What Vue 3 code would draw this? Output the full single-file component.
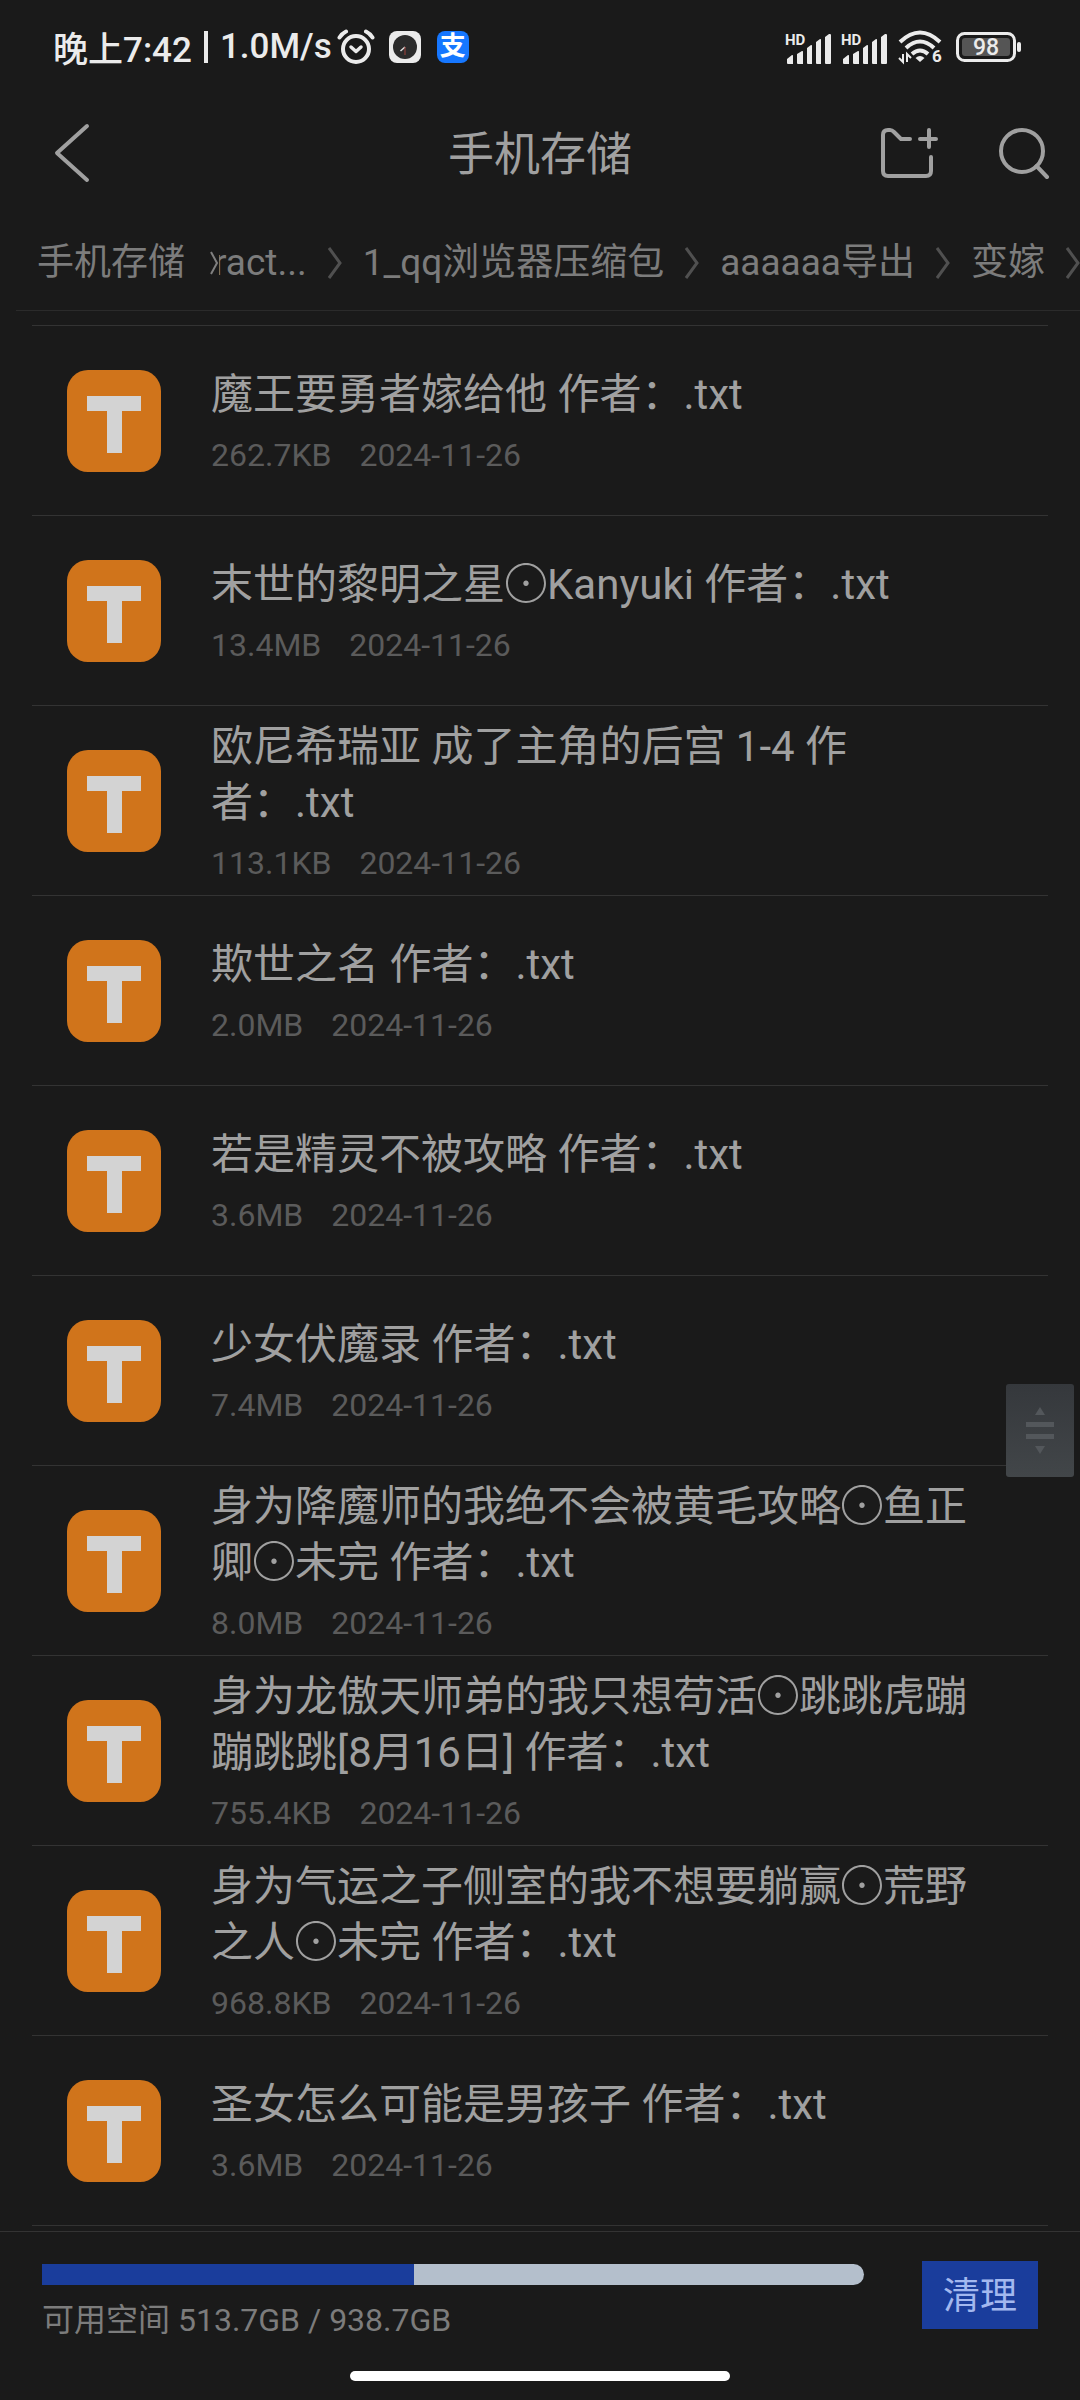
<script setup>
const crumbs = ['ract...', '1_qq浏览器压缩包', 'aaaaaa导出', '变嫁']

const files = [
  { name: '魔王要勇者嫁给他 作者：.txt', size: '262.7KB', date: '2024-11-26' },
  { name: '末世的黎明之星⊙Kanyuki 作者：.txt', size: '13.4MB', date: '2024-11-26' },
  { name: '欧尼希瑞亚 成了主角的后宫 1-4 作者：.txt', size: '113.1KB', date: '2024-11-26' },
  { name: '欺世之名 作者：.txt', size: '2.0MB', date: '2024-11-26' },
  { name: '若是精灵不被攻略 作者：.txt', size: '3.6MB', date: '2024-11-26' },
  { name: '少女伏魔录 作者：.txt', size: '7.4MB', date: '2024-11-26' },
  { name: '身为降魔师的我绝不会被黄毛攻略⊙鱼正卿⊙未完 作者：.txt', size: '8.0MB', date: '2024-11-26' },
  { name: '身为龙傲天师弟的我只想苟活⊙跳跳虎蹦蹦跳跳[8月16日] 作者：.txt', size: '755.4KB', date: '2024-11-26' },
  { name: '身为气运之子侧室的我不想要躺赢⊙荒野之人⊙未完 作者：.txt', size: '968.8KB', date: '2024-11-26' },
  { name: '圣女怎么可能是男孩子 作者：.txt', size: '3.6MB', date: '2024-11-26' },
]

// Splits a name so that each ⊙ separator can be set as a full-width ring.
const parts = (name) => name.split(/(⊙)/)

const free = 513.7
const total = 938.7
const usedPercent = ((total - free) / total) * 100
</script>

<template>
  <div class="page" lang="zh-CN">
    <div class="status">
      <div class="status-left">
        <span class="clock">晚上7:42</span>
        <span class="divider"></span>
        <span>1.0M/s</span>
        <svg class="alarm" width="38" height="36" viewBox="0 0 38 36" fill="none" stroke="#ebebeb" stroke-linecap="round" stroke-linejoin="round">
          <circle cx="19" cy="20" r="13" stroke-width="4" />
          <path d="M2.500 8.500Q5 4.500 9 2.500M35.500 8.500Q33 4.500 29 2.500" stroke-width="4" />
          <path d="M14 18l5 4.500 5-4.500" stroke-width="3.500" />
        </svg>
        <svg class="app" width="32" height="32" viewBox="0 0 32 32">
          <rect width="32" height="32" rx="8" fill="#ebebeb" />
          <circle cx="16" cy="16" r="12" fill="#2b2b2b" />
          <path d="M16 16l-4.500 4" stroke="#ddd" stroke-width="1.500" />
          <path d="M16 16v8" stroke="#a0403a" stroke-width="1" />
        </svg>
        <span class="pay">支</span>
      </div>
      <div class="status-right">
        <svg v-for="n in 2" :key="n" class="signal" width="48" height="36" viewBox="0 -4 48 36" fill="#ebebeb">
          <text x="0" y="12" class="hd">HD</text>
          <path d="M2 30v-4l5-4q1-.5 1 1v8h-5q-1 0-1-1zM12 30V21l5-3q1-.5 1 1v12h-5q-1 0-1-1zM22 30V15l4-3q1-.5 1 1v18h-4q-1 0-1-1zM31 30V9l4-3q1-.5 1 1v24h-4q-1 0-1-1zM40 30V4l4-3q2-.5 2 1v28q0 1-1 1h-4q-1 0-1-1z" />
        </svg>
        <svg class="wifi" width="46" height="38" viewBox="0 0 46 38" fill="none" stroke="#ebebeb" stroke-width="4">
          <path d="M2 14Q22-5 42 14M8 20Q22 7 36 20M14 26Q22 19 30 26" />
          <path d="M17.500 30Q22 26 26.500 30L22 34z" fill="#ebebeb" stroke="none" />
          <path d="M5 26v8l-4-4M9 34v-8l4 4" stroke-width="2" />
          <text x="34" y="34" class="six">6</text>
        </svg>
        <svg class="battery" width="66" height="30" viewBox="0 0 66 30">
          <rect x="1.500" y="1.500" width="57" height="27" rx="7" fill="none" stroke="#ebebeb" stroke-width="3" />
          <rect x="6" y="6" width="48" height="18" rx="3" fill="#555" />
          <rect x="61" y="10" width="4" height="10" rx="2" fill="#ebebeb" />
          <text x="30" y="23" text-anchor="middle" class="level">98</text>
        </svg>
      </div>
    </div>

    <header class="header">
      <button class="icon back" aria-label="返回">
        <svg width="36" height="60" viewBox="0 0 36 60"><path d="M33 3L3 30l30 27" /></svg>
      </button>
      <h1>手机存储</h1>
      <div class="actions">
        <button class="icon" aria-label="新建文件夹">
          <svg width="58" height="52" viewBox="0 0 58 52">
            <path d="M30 12h-9l-7-7Q12 3 10 3H8Q3 3 3 8v36q0 5 5 5h38q5 0 5-5V30M49 3v17M40 12h16" />
          </svg>
        </button>
        <button class="icon" aria-label="搜索">
          <svg width="52" height="52" viewBox="0 0 52 52"><circle cx="24" cy="24" r="21" /><path d="M38.500 39L49 50" /></svg>
        </button>
      </div>
    </header>

    <nav class="crumbs">
      <a href="#" class="root">手机存储</a>
      <svg class="edge" width="9" height="24" viewBox="0 0 9 24"><path d="M1 1l6 11-6 11" /></svg>
      <div class="trail">
        <template v-for="c in crumbs" :key="c">
          <a href="#">{{ c }}</a>
          <svg class="arrow" width="14" height="32" viewBox="0 0 14 32"><path d="M1 1l11 15L1 31" /></svg>
        </template>
      </div>
    </nav>

    <main class="content">
      <ul class="list">
        <li v-for="f in files" :key="f.name">
          <a href="#" class="file">
            <svg class="type" width="94" height="102" viewBox="0 0 94 102">
              <rect width="94" height="102" rx="21" fill="#d0741b" />
              <path d="M20 26h54v15H55v42H40V41H20z" fill="#d3d3d3" />
            </svg>
            <div class="info">
              <div class="name"><template v-for="(p, i) in parts(f.name)" :key="i"><span v-if="p === '⊙'" class="ring">⊙</span><template v-else>{{ p }}</template></template></div>
              <div class="meta"><span>{{ f.size }}</span><span>{{ f.date }}</span></div>
            </div>
          </a>
        </li>
      </ul>
      <button class="thumb" aria-label="快速滚动">
        <svg width="28" height="48" viewBox="0 0 28 48" fill="#53575b">
          <path d="M14 0l5 8H9zM0 15h28v5H0zM0 27h28v5H0zM9 39h10l-5 8z" />
        </svg>
      </button>
    </main>

    <footer class="footer">
      <div class="storage">
        <div class="track" role="progressbar" aria-label="已用空间" :aria-valuenow="Math.round(usedPercent)">
          <div class="used" :style="{ width: usedPercent + '%' }"></div>
        </div>
        <div class="free">可用空间 {{ free }}GB / {{ total }}GB</div>
      </div>
      <button class="clean">清理</button>
    </footer>
    <div class="home"></div>
  </div>
</template>

<style>
html,
body {
  background: #1a1a1a;
}
</style>

<style scoped>
.page {
  background: #1a1a1a;
  color: #a0a0a0;
  font-family: Roboto, "Noto Sans CJK SC", sans-serif;
  font-weight: 400;
  overflow: hidden;
}
button {
  border: 0;
  padding: 0;
  background: none;
  font: inherit;
  color: inherit;
}
a {
  color: inherit;
  text-decoration: none;
}
svg {
  display: block;
  flex: none;
}

.status {
  display: flex;
  justify-content: space-between;
  align-items: center;
  height: 93px;
  padding: 0 58px 0 53px;
  color: #ebebeb;
  font-size: 35px;
  font-weight: 500;
}
.status-left,
.status-right {
  display: flex;
  align-items: center;
}
.divider {
  width: 4px;
  height: 32px;
  margin: 0 12px;
  background: #ebebeb;
}
.alarm {
  margin-left: 5px;
}
.app {
  margin: 0 16px 0 14px;
}
.pay {
  width: 32px;
  height: 32px;
  border-radius: 8px;
  background: #1677ff;
  color: #fff;
  font-size: 26px;
  font-weight: 700;
  line-height: 30px;
  text-align: center;
}
.signal {
  margin-right: 8px;
}
.hd {
  font-size: 15px;
  font-weight: 700;
}
.wifi {
  margin: 0 12px 0 1px;
}
.six {
  font-size: 17px;
  font-weight: 700;
  fill: #ebebeb;
  stroke: none;
}
.level {
  font-size: 23px;
  font-weight: 500;
  fill: #ebebeb;
}

.header {
  display: grid;
  grid-template-columns: 1fr auto 1fr;
  align-items: center;
  height: 119px;
  padding: 0 30px;
}
.header h1 {
  margin: 0;
  padding-bottom: 6px;
  font-size: 46px;
  font-weight: 400;
}
.icon svg {
  fill: none;
  stroke: #a0a0a0;
  stroke-width: 4;
  stroke-linecap: round;
  stroke-linejoin: round;
}
.back {
  justify-self: start;
  margin-left: 24px;
}
.actions {
  display: flex;
  justify-content: flex-end;
  gap: 60px;
}

.crumbs {
  display: flex;
  align-items: center;
  height: 94px;
  margin-left: 16px;
  padding: 4px 0 0 21px;
  border-bottom: 1px solid #2b2b2b;
  color: #7c7c7c;
  font-size: 37px;
  line-height: 48px;
  white-space: nowrap;
}
.edge {
  margin-left: 25px;
  fill: none;
  stroke: #808080;
  stroke-width: 2;
}
.trail {
  display: flex;
  flex: 1;
  align-items: center;
  justify-content: flex-end;
  gap: 21px;
  min-width: 0;
  overflow: hidden;
}
.arrow {
  fill: none;
  stroke: #505050;
  stroke-width: 3;
}

.content {
  position: relative;
  padding: 14px 32px 5px;
}
.list {
  margin: 0;
  padding: 0;
  list-style: none;
  border-top: 1px solid #333;
}
.list li {
  border-bottom: 1px solid #333;
}
.file {
  display: flex;
  align-items: center;
  gap: 50px;
  min-height: 189px;
  padding: 0 72px 0 35px;
}
.info {
  flex: 1;
  min-width: 0;
}
.name {
  font-size: 42px;
  line-height: 56px;
}
.ring {
  display: inline-flex;
  justify-content: center;
  width: 42px;
  font-size: 54px;
  font-weight: 100;
  line-height: 0;
  vertical-align: -5px;
}
.meta {
  display: flex;
  gap: 28px;
  margin-top: 12px;
  color: #5b5b5b;
  font-size: 32px;
  line-height: 40px;
}
.thumb {
  position: absolute;
  top: 1073px;
  right: 6px;
  display: flex;
  align-items: center;
  justify-content: center;
  width: 68px;
  height: 93px;
  border-radius: 3px;
  background: linear-gradient(#35383c, #424649);
}

.footer {
  display: flex;
  align-items: flex-start;
  gap: 58px;
  padding: 29px 42px 0;
  border-top: 1px solid #333;
}
.storage {
  flex: 1;
}
.track {
  height: 21px;
  margin-top: 3px;
  overflow: hidden;
  border-radius: 0 11px 11px 0;
  background: #b4bfcc;
}
.used {
  height: 100%;
  background: #1a3d9c;
}
.free {
  margin-top: 15px;
  color: #7c7c7c;
  font-size: 32px;
  line-height: 40px;
}
.clean {
  width: 116px;
  height: 68px;
  padding-top: 4px;
  background: #1a3d9c;
  color: #a3b8ef;
  font-size: 37px;
  line-height: 48px;
}
.home {
  width: 380px;
  height: 10px;
  margin: 31px auto 18px;
  border-radius: 5px;
  background: #fff;
}
</style>
